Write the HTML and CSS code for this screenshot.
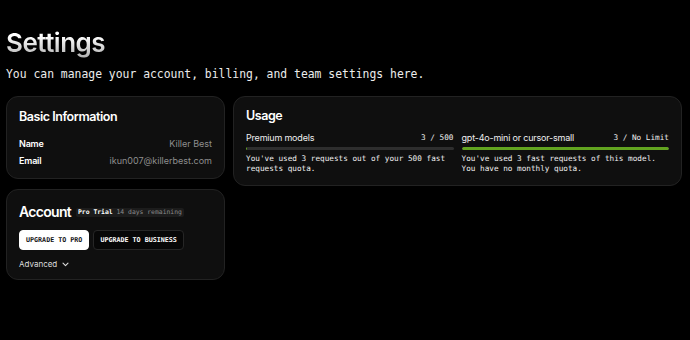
FILE: index.html
```html
<!DOCTYPE html>
<html lang="en">
<head>
    <meta charset="UTF-8">
    <meta name="viewport" content="width=device-width, initial-scale=1.0">
    <title>Settings</title>
    <link rel="stylesheet" href="styles.css">
</head>
<body>
    <div class="page-header">
        <h1 class="page-title">Settings</h1>
        <p class="page-subtitle">You can manage your account, billing, and team settings here.</p>
    </div>

    <div class="settings-grid">
        <div class="left-col">
            <div class="card info-card">
                <h2 class="card-title">Basic Information</h2>
                <div class="info-row">
                    <span class="info-label">Name</span>
                    <span class="info-value">Killer Best</span>
                </div>
                <div class="info-row">
                    <span class="info-label">Email</span>
                    <span class="info-value">ikun007@killerbest.com</span>
                </div>
            </div>

            <div class="card account-card">
                <div class="account-head">
                    <h2 class="card-title account-title">Account</h2>
                    <span class="plan-badge"><span class="plan-name">Pro Trial</span> 14 days remaining</span>
                </div>
                <div class="button-row">
                    <button class="btn btn-light">UPGRADE TO PRO</button>
                    <button class="btn btn-dark">UPGRADE TO BUSINESS</button>
                </div>
                <div class="advanced">
                    Advanced
                    <svg width="7" height="5" viewBox="0 0 7 5" fill="none" stroke="currentColor" stroke-width="1.1" stroke-linecap="round" stroke-linejoin="round"><path d="M1 1.2 L3.5 3.7 L6 1.2"/></svg>
                </div>
            </div>
        </div>

        <div class="card usage-card">
            <h2 class="card-title">Usage</h2>
            <div class="usage-cols">
                <div class="usage-item">
                    <div class="usage-head">
                        <span class="usage-name">Premium models</span>
                        <span class="usage-count">3 / 500</span>
                    </div>
                    <div class="bar"><div class="bar-fill" style="width: 0.6%"></div></div>
                    <p class="usage-note">You've used 3 requests out of your 500 fast requests quota.</p>
                </div>
                <div class="usage-item">
                    <div class="usage-head">
                        <span class="usage-name">gpt-4o-mini or cursor-small</span>
                        <span class="usage-count">3 / No Limit</span>
                    </div>
                    <div class="bar"><div class="bar-fill" style="width: 100%"></div></div>
                    <p class="usage-note">You've used 3 fast requests of this model. You have no monthly quota.</p>
                </div>
            </div>
        </div>
    </div>
</body>
</html>
```

FILE: styles.css
```css
body {
    margin: 0;
    padding: 26px 8px 0 6px;
    background: #000;
    color: #fff;
    font-family: Inter, "Noto Sans", sans-serif;
}
.page-header {
    margin-bottom: 14px;
}
.page-title {
    margin: 0;
    font-size: 26px;
    line-height: 34px;
    font-weight: 600;
    letter-spacing: -0.5px;
    background: linear-gradient(180deg, #ffffff 30%, #a8a8a8 100%);
    -webkit-background-clip: text;
    background-clip: text;
    color: transparent;
    display: inline-block;
    vertical-align: top;
}
.page-subtitle {
    margin: 6px 0 0;
    font-family: "DejaVu Sans Mono", monospace;
    font-size: 11.4px;
    line-height: 16px;
    color: #ececec;
}
.settings-grid {
    display: flex;
    gap: 8px;
    align-items: flex-start;
}
.left-col {
    width: 219px;
    display: flex;
    flex-direction: column;
    gap: 10px;
}
.card {
    background: #0f0f0f;
    border: 1px solid #222;
    border-radius: 12px;
    box-sizing: border-box;
}
.card-title {
    margin: 0;
    font-size: 12.5px;
    line-height: 16px;
    font-weight: 600;
    letter-spacing: -0.45px;
}
.info-card {
    padding: 12px 12px 10px;
}
.info-row {
    display: flex;
    justify-content: space-between;
    font-size: 9px;
    line-height: 14px;
    margin-top: 3px;
}
.info-card .card-title + .info-row {
    margin-top: 12px;
}
.info-label {
    font-weight: 600;
    letter-spacing: -0.2px;
}
.info-value {
    color: #8e8e8e;
}
.account-card {
    padding: 13px 12px 9px;
}
.account-head {
    display: flex;
    align-items: center;
    gap: 5px;
}
.account-title {
    font-size: 14px;
    line-height: 18px;
    letter-spacing: -0.7px;
}
.plan-badge {
    font-family: "DejaVu Sans Mono", monospace;
    font-size: 6.4px;
    line-height: 9px;
    color: #8a8a8a;
    background: #1c1c1c;
    border-radius: 2px;
    padding: 0 2px;
}
.plan-name {
    color: #fff;
    font-weight: bold;
}
.button-row {
    display: flex;
    gap: 4px;
    margin-top: 9px;
}
.btn {
    font-family: "DejaVu Sans Mono", monospace;
    font-size: 6.7px;
    font-weight: bold;
    height: 20px;
    padding: 0 6px;
    border-radius: 4px;
    cursor: pointer;
}
.btn-light {
    background: #fff;
    color: #111;
    border: 1px solid #fff;
}
.btn-dark {
    background: #070707;
    color: #fff;
    border: 1px solid #262626;
}
.advanced {
    margin-top: 8px;
    font-size: 8px;
    line-height: 12px;
    color: #ddd;
    display: flex;
    align-items: center;
    gap: 5px;
}
.usage-card {
    flex: 1;
    padding: 11px 12px 11px;
}
.usage-cols {
    display: grid;
    grid-template-columns: 1fr 1fr;
    gap: 8px;
    margin-top: 8px;
}
.usage-head {
    display: flex;
    justify-content: space-between;
    align-items: center;
    line-height: 12px;
}
.usage-name {
    font-size: 9px;
    letter-spacing: -0.2px;
    color: #eee;
}
.usage-count {
    font-family: "DejaVu Sans Mono", monospace;
    font-size: 7.7px;
    color: #eee;
}
.bar {
    margin-top: 3px;
    height: 3px;
    border-radius: 2px;
    background: #2e2e2e;
    overflow: hidden;
}
.bar-fill {
    height: 100%;
    background: #62a420;
    border-radius: 2px;
}
.usage-note {
    margin: 4px 0 0;
    font-family: "DejaVu Sans Mono", monospace;
    font-size: 7.7px;
    line-height: 10px;
    color: #f0f0f0;
}
```
